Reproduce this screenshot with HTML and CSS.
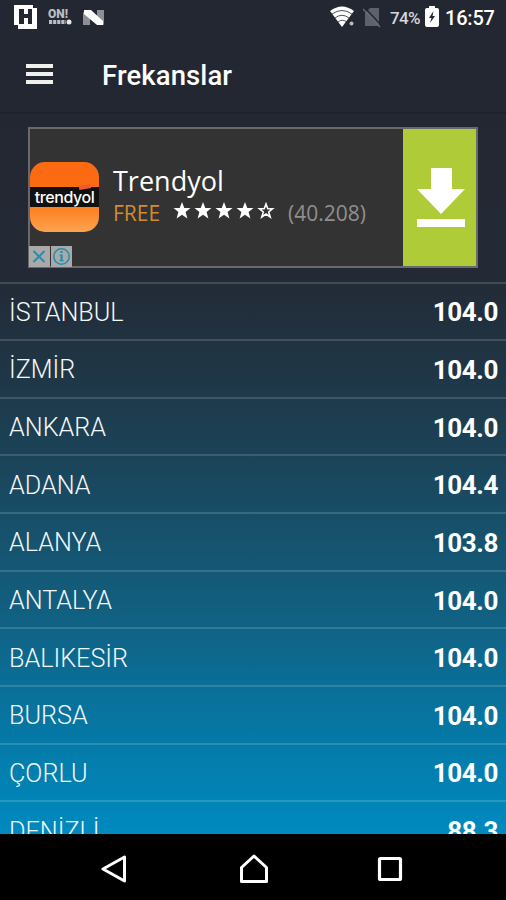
FILE: index.html
```html
<!DOCTYPE html>
<html lang="tr">
<head>
    <meta charset="UTF-8">
    <meta name="viewport" content="width=device-width, initial-scale=1.0">
    <title>Frekanslar</title>
    <link rel="stylesheet" href="styles.css">
</head>
<body>
    <div class="status-bar">
        <div class="notifications">
            <svg class="icon-h" width="24" height="24" viewBox="0 0 24 24">
                <path fill="#fff" d="M0 0H19V3H23V24H4V20H0Z"/>
                <path fill="#222731" d="M5 4H10V9H14V4H18V19H14V13H10V19H5Z"/>
            </svg>
            <div class="icon-on">
                <span>ON!</span>
                <svg width="24" height="6" viewBox="0 0 24 6">
                    <path stroke="#b9bcc0" stroke-width="4" stroke-dasharray="3.200 0.900" d="M1 3H18"/>
                    <circle cx="21" cy="3" r="2.500" fill="#e6e7e8"/>
                </svg>
            </div>
            <svg class="icon-n" width="22" height="17" viewBox="0 0 22 17">
                <path fill="#8d9196" d="M0 3L7 8V16H0ZM14 1H21V16L14 10Z"/>
                <path fill="#fff" d="M1 1H8L20 12V16H14L1 5Z"/>
            </svg>
        </div>
        <div class="system">
            <svg class="icon-wifi" width="25" height="22" viewBox="0 0 25 22">
                <path fill="#fff" d="M0 5Q12-4 24 5L12 21Z"/>
                <path fill="none" stroke="#222731" stroke-width="0.800" d="M2 8Q12 1 22 8M5 12Q12 6.500 19 12M8 16Q12 12.500 17 16"/>
                <circle cx="21.500" cy="17.500" r="2" fill="#bbb"/>
            </svg>
            <svg class="icon-sim" width="18" height="20" viewBox="0 0 18 20">
                <path fill="#5c626a" d="M7 0H16V18H2V5Z"/>
                <path stroke="#222731" stroke-width="1.500" d="M2 0L18 17"/>
                <path stroke="#666b73" stroke-width="1.500" d="M0 1L17 19"/>
            </svg>
            <span class="battery-level">74%</span>
            <svg class="icon-battery" width="14" height="21" viewBox="0 0 14 21">
                <path fill="#fff" d="M4 0H10V2H12Q14 2 14 4V19Q14 21 12 21H2Q0 21 0 19V4Q0 2 2 2H4Z"/>
                <path fill="#222731" d="M8.500 5L4 12H6.500L5 17L10 10H7.500Z"/>
            </svg>
            <span class="clock">16:57</span>
        </div>
    </div>

    <header>
        <div class="menu">
            <span></span>
            <span></span>
            <span></span>
        </div>
        <h1>Frekanslar</h1>
    </header>

    <main>
        <div class="ad">
            <div class="app-icon"><span>trendyol</span><i></i></div>
            <div class="ad-info">
                <h2>Trendyol</h2>
                <div class="ad-rating">
                    <span class="price">FREE</span>
                    <svg class="stars" width="102" height="18" viewBox="0 0 102 18">
                        <defs>
                            <path id="star" d="M9 0L11.300 6H17.500L12.600 10L14.400 16.500L9 12.800L3.600 16.500L5.400 10L.500 6H6.700Z"/>
                        </defs>
                        <g fill="#fff">
                            <use href="#star"/>
                            <use href="#star" x="21"/>
                            <use href="#star" x="42"/>
                            <use href="#star" x="63"/>
                        </g>
                        <path fill="none" stroke="#fff" stroke-width="1.600" d="M93 2L94.800 6.800H99.500L95.700 10L97.200 15L93 12L88.800 15L90.300 10L86.500 6.800H91.200Z"/>
                    </svg>
                    <span class="votes">(40.208)</span>
                </div>
            </div>
            <div class="download">
                <svg width="48" height="60" viewBox="0 0 48 60">
                    <path fill="#fff" d="M14 0H35V21H48L24 46L0 21H14ZM0 51H48V59H0Z"/>
                </svg>
            </div>
            <div class="ad-choices">
                <svg width="21" height="21" viewBox="0 0 21 21">
                    <path stroke="#258fa9" stroke-width="2" d="M4.500 5L15.500 16M15.500 5L4.500 16"/>
                </svg>
                <svg width="21" height="21" viewBox="0 0 21 21">
                    <circle cx="10.500" cy="10.500" r="7.700" fill="none" stroke="#258fa9" stroke-width="1.500"/>
                    <path fill="#258fa9" d="M9.500 5H11.700V7H9.500ZM8.500 8.500H11.700V14H12.700V15.300H8.500V14H9.500V9.800H8.500Z"/>
                </svg>
            </div>
        </div>

        <ul class="frequencies">
            <li><span>İSTANBUL</span><b>104.0</b></li>
            <li><span>İZMİR</span><b>104.0</b></li>
            <li><span>ANKARA</span><b>104.0</b></li>
            <li><span>ADANA</span><b>104.4</b></li>
            <li><span>ALANYA</span><b>103.8</b></li>
            <li><span>ANTALYA</span><b>104.0</b></li>
            <li><span>BALIKESİR</span><b>104.0</b></li>
            <li><span>BURSA</span><b>104.0</b></li>
            <li><span>ÇORLU</span><b>104.0</b></li>
            <li><span>DENİZLİ</span><b>88.3</b></li>
        </ul>
    </main>

    <footer>
        <svg width="26" height="30" viewBox="0 0 26 30">
            <path fill="none" stroke="#fff" stroke-width="3" stroke-linejoin="round" d="M23.500 3V27L2 15Z"/>
        </svg>
        <svg width="30" height="30" viewBox="0 0 30 30">
            <path fill="none" stroke="#fff" stroke-width="3" stroke-linejoin="round" d="M2.500 13.500L15 2L27.500 13.500V27.500H2.500Z"/>
        </svg>
        <svg width="26" height="26" viewBox="0 0 26 26">
            <rect x="2.500" y="2.500" width="21" height="21" rx="1" fill="none" stroke="#fff" stroke-width="3.200"/>
        </svg>
    </footer>
</body>
</html>
```

FILE: styles.css
```css
/* General Styling */
* {
    box-sizing: border-box;
}

body {
    font-family: Roboto, sans-serif;
    margin: 0;
    height: 900px;
    display: flex;
    flex-direction: column;
    overflow: hidden;
    color: #fff;
    background-color: #222731;
}

svg {
    display: block;
    flex: none;
}

/* Status bar */
.status-bar {
    height: 36px;
    display: flex;
    justify-content: space-between;
    padding: 5px 11px 0 14px;
}

.notifications,
.system {
    display: flex;
    align-items: flex-start;
}

.icon-on {
    width: 24px;
    margin: 4px 11px 0 10px;
    color: #b9bcc0;
    font-size: 12px;
    font-weight: 900;
    line-height: 10px;
}

.icon-on span {
    display: block;
}

.icon-n {
    margin-top: 4px;
}

.icon-wifi {
    margin-top: 1px;
}

.icon-sim {
    margin: 3px 9px 0 8px;
}

.battery-level {
    width: 32px;
    margin-right: 3px;
    font-size: 17px;
    font-weight: 500;
    line-height: 26px;
    letter-spacing: -0.6px;
    color: #d5d7d9;
}

.icon-battery {
    margin: 1px 6px 0 0;
}

.clock {
    width: 50px;
    font-size: 20px;
    font-weight: 500;
    line-height: 26px;
    letter-spacing: -0.2px;
    white-space: nowrap;
}

/* Toolbar */
header {
    height: 78px;
    display: flex;
    align-items: center;
    padding: 0 26px;
    border-bottom: 2px solid #1d222c;
}

.menu {
    width: 27px;
    display: flex;
    flex-direction: column;
    gap: 4px;
    margin-right: 49px;
}

.menu span {
    height: 4px;
    background-color: #f0f0ec;
}

h1 {
    margin: 2px 0 0;
    font-size: 27.5px;
    font-weight: 500;
    letter-spacing: 0.1px;
}

main {
    height: 720px;
    overflow: hidden;
    background: linear-gradient(to bottom, #232731 0%, #232a36 22%, #1f3646 36%, #1b4459 48%, #125e7e 68%, #047ba9 88%, #008abf 100%);
}

/* Ad banner */
.ad {
    position: relative;
    width: 450px;
    height: 141px;
    display: flex;
    align-items: center;
    margin: 13px 0 13.5px 28px;
    border: 2px solid #69696b;
    background-color: #333;
}

.app-icon {
    position: relative;
    width: 69px;
    height: 70px;
    display: flex;
    align-items: center;
    margin-bottom: 2px;
    border-radius: 15px;
    overflow: hidden;
    background: linear-gradient(to bottom, #fc6a12 0%, #fc6a12 35%, #111 35%, #111 64%, #fb7f20 64%, #fda34f 100%);
}

.app-icon span {
    width: 100%;
    font-family: Inter, sans-serif;
    font-size: 16px;
    font-weight: 500;
    letter-spacing: -0.4px;
    text-align: center;
}

.app-icon i {
    position: absolute;
    top: 23px;
    right: 8px;
    width: 12px;
    height: 4px;
    background-color: #f25a32;
    transform: rotate(-10deg);
}

.ad-info {
    flex: 1;
    margin: 0 0 3px 14px;
}

.ad h2 {
    margin: 0;
    font-family: "Open Sans", sans-serif;
    font-size: 27px;
    font-weight: 400;
    line-height: 34px;
}

.ad-rating {
    display: flex;
    align-items: center;
    font-family: "Open Sans", sans-serif;
    font-size: 21px;
    line-height: 30px;
}

.price {
    width: 60px;
    color: #d38b2d;
}

.stars {
    margin: -5px 13px 0 0;
}

.votes {
    color: #8f8f8f;
}

.download {
    width: 73px;
    height: 137px;
    display: flex;
    align-items: center;
    justify-content: center;
    background-color: #b0cb38;
}

.download svg {
    margin-left: 2px;
}

.ad-choices {
    position: absolute;
    left: -1px;
    bottom: -1px;
    display: flex;
    gap: 1px;
}

.ad-choices svg {
    background-color: #a9a9a9;
}

/* Frequency list */
.frequencies {
    list-style: none;
    margin: 0;
    padding: 0;
}

.frequencies li {
    height: 57.65px;
    display: flex;
    align-items: center;
    justify-content: space-between;
    padding: 2px 8px 0 9px;
    border-top: 2px solid rgba(255, 255, 255, 0.15);
}

.frequencies span {
    font-size: 25.2px;
    font-weight: 300;
    color: #f4f7f9;
}

.frequencies b {
    font-size: 26px;
    font-weight: 700;
    letter-spacing: -0.4px;
}

/* Navigation bar */
footer {
    height: 66px;
    display: flex;
    align-items: center;
    gap: 110px;
    padding: 4px 0 0 101px;
    background-color: #000;
}

footer svg:nth-child(2) {
    margin: 0 -2px 0 2px;
}
```
